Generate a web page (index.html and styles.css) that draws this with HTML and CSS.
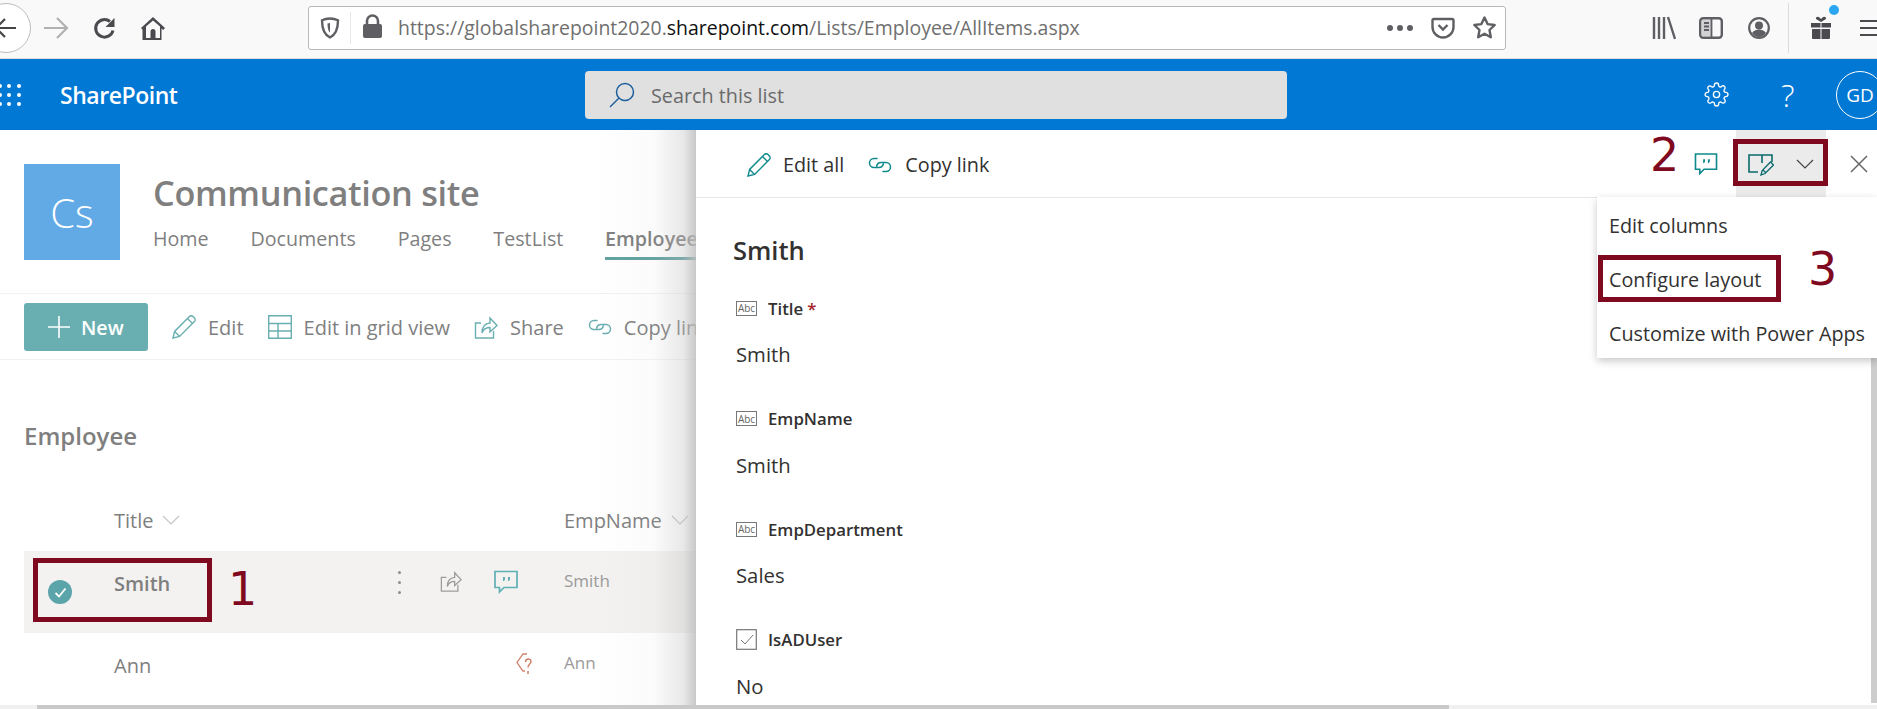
FILE: index.html
```html
<!DOCTYPE html>
<html lang="en">
<head>
<meta charset="utf-8">
<title>Employee - All Items</title>
<link rel="stylesheet" href="styles.css">
</head>
<body>
<svg class="defs" width="0" height="0" aria-hidden="true">
  <symbol id="i-pencil" viewBox="0 0 24 24"><path d="M1 23l1.600-6.600L17.400 1.600c1-1 2.600-1 3.600 0l1.400 1.400c1 1 1 2.600 0 3.600L7.600 21.400zM2.600 16.400l5 5M15.500 3.500l5 5" fill="none" stroke="currentColor" stroke-width="1.400"/></symbol>
  <symbol id="i-link" viewBox="0 0 24 20"><path d="M9 3.500H6a4.500 4.500 0 0 0 0 9h5a4.500 4.500 0 0 0 4.300-3.500M15 16.500h3a4.500 4.500 0 0 0 0-9h-5A4.500 4.500 0 0 0 8.700 11" fill="none" stroke="currentColor" stroke-width="1.500" stroke-linecap="round"/></symbol>
  <symbol id="i-share" viewBox="0 0 24 24"><path d="M7 8H1.500v15h18v-7M8 18c0-6 3-9.500 8-10V3l7 7.500L16 17v-4.500c-4 0-6.500 1.500-8 5.500z" fill="none" stroke="currentColor" stroke-width="1.400"/></symbol>
  <symbol id="i-comment" viewBox="0 0 24 23"><path d="M1 1h22v16H10l-4.500 4.500V17H1z" fill="none" stroke="currentColor" stroke-width="1.700"/><path d="M9 6.500h2v2.500l-1 1.500H9zM14 6.500h2v2.500l-1 1.500h-1z" fill="currentColor"/></symbol>
  <symbol id="i-chev" viewBox="0 0 18 10"><path d="M1 1l8 8 8-8" fill="none" stroke="currentColor" stroke-width="1.200"/></symbol>
</svg>

<div class="page">
  <header class="browser">
    <div class="back">
      <svg width="22" height="20" viewBox="0 0 22 20"><path d="M21 10H1M10 1l-9 9 9 9" fill="none" stroke="#444" stroke-width="2.200"/></svg>
    </div>
    <svg class="fwd" width="26" height="22" viewBox="0 0 26 22"><path d="M1 11h23M14 1l10 10-10 10" fill="none" stroke="#b1b1b1" stroke-width="2.200"/></svg>
    <svg class="reload" width="24" height="24" viewBox="0 0 24 24"><path d="M20 14.500A8.800 8.800 0 1 1 17 5.500" fill="none" stroke="#4a4a4f" stroke-width="3"/><path d="M21.500 2v9h-9z" fill="#4a4a4f"/></svg>
    <svg class="home" width="26" height="26" viewBox="0 0 26 26"><path d="M1 13L13 2l12 11-1.800 2-1.700-1.500V25h-19V13.500L2.800 15z" fill="#4a4a4f"/><path d="M6 11.500L13 5.500l7 6V23h-4.500v-6.500a2.500 2.500 0 0 0-5 0V23H6z" fill="#f9f9fa"/><rect x="11.500" y="17" width="3" height="5" fill="#4a4a4f"/></svg>
    <div class="urlbar">
      <svg class="shield" width="20" height="22" viewBox="0 0 20 22"><path d="M10 1.500c3 0 6 .8 8 1.800 0 9-2.500 14.500-8 17.200C4.500 17.800 2 12.300 2 3.300c2-1 5-1.800 8-1.800z" fill="none" stroke="#5f5f63" stroke-width="2.400"/><path d="M10 6v9.500c-1.500-1-2.500-4-2.500-9z" fill="#5f5f63"/></svg>
      <span class="url-div"></span>
      <svg class="lock" width="19" height="24" viewBox="0 0 19 24"><path d="M4 11V7a5.500 5.500 0 0 1 11 0v4" fill="none" stroke="#5f5f63" stroke-width="2.600"/><rect y="10" width="19" height="14" rx="2" fill="#5f5f63"/></svg>
      <span class="url">https://globalsharepoint2020.<b>sharepoint.com</b>/Lists/Employee/AllItems.aspx</span>
      <span class="url-dots"><i></i><i></i><i></i></span>
      <svg class="pocket" width="24" height="22" viewBox="0 0 24 22"><path d="M3 2h18a1.500 1.500 0 0 1 1.500 1.500V10a10.500 10.500 0 0 1-21 0V3.500A1.500 1.500 0 0 1 3 2z" fill="none" stroke="#5f5f63" stroke-width="2.400"/><path d="M7.500 8l4.500 4.500L16.500 8" fill="none" stroke="#5f5f63" stroke-width="2.400"/></svg>
      <svg class="star" width="25" height="25" viewBox="0 0 25 25"><path d="M12.500 2.500l3.100 6.600 7.100.9-5.200 5 1.300 7.200-6.300-3.500-6.300 3.500 1.300-7.200-5.200-5 7.100-.9z" fill="none" stroke="#5f5f63" stroke-width="2.400" stroke-linejoin="round"/></svg>
    </div>
    <svg class="library" width="24" height="24" viewBox="0 0 24 24"><path d="M2 1v22M7 1v22M12 1v22M16 1l7 22" fill="none" stroke="#5f5f63" stroke-width="2.400"/></svg>
    <svg class="sidebar" width="24" height="22" viewBox="0 0 24 22"><rect x="1.200" y="1.200" width="21.600" height="19.600" rx="3" fill="none" stroke="#5f5f63" stroke-width="2.400"/><path d="M3 3h9.500v16H3z" fill="#5f5f63" opacity=".25"/><path d="M12.500 2v18M5 6h5M5 9.500h5M5 13h5" fill="none" stroke="#5f5f63" stroke-width="1.800"/></svg>
    <svg class="profile" width="22" height="22" viewBox="0 0 22 22"><circle cx="11" cy="11" r="9.800" fill="none" stroke="#5f5f63" stroke-width="2.200"/><circle cx="11" cy="8.500" r="4" fill="#5f5f63"/><path d="M4 16c2-3 4.500-3.500 7-3.500s5 .5 7 3.500c-2 2.500-4.500 4-7 4s-5-1.500-7-4z" fill="#5f5f63"/></svg>
    <span class="bar-div"></span>
    <div class="gift">
      <svg width="22" height="24" viewBox="0 0 22 24"><path d="M1 7h9.500v4.500H1zM11.500 7H21v4.500h-9.500zM2 13h8.500v10H3a1 1 0 0 1-1-1zM11.500 13H20v9a1 1 0 0 1-1 1h-7.500z" fill="#4a4a4f"/><path d="M11 6L6 3c-.5-2 2-3 3.500-1.500L11 3l1.500-1.500C14 0 16.500 1 16 3z" fill="#4a4a4f"/></svg>
      <span class="gift-dot"></span>
    </div>
    <span class="burger"><i></i><i></i><i></i></span>
  </header>

  <nav class="suite">
    <svg class="waffle" width="22" height="24" viewBox="0 0 22 24" fill="#fff"><circle cx="1" cy="3" r="2"/><circle cx="10" cy="3" r="2"/><circle cx="20" cy="3" r="2"/><circle cx="1" cy="12" r="2"/><circle cx="10" cy="12" r="2"/><circle cx="20" cy="12" r="2"/><circle cx="1" cy="21" r="2"/><circle cx="10" cy="21" r="2"/><circle cx="20" cy="21" r="2"/></svg>
    <span class="brand">SharePoint</span>
    <div class="search">
      <svg width="26" height="26" viewBox="0 0 26 26"><circle cx="16" cy="10" r="8.500" fill="none" stroke="#1f5f9e" stroke-width="1.500"/><path d="M10 16L1 25" fill="none" stroke="#1f5f9e" stroke-width="1.500"/></svg>
      <span class="search-text">Search this list</span>
    </div>
    <svg class="gear" width="25" height="25" viewBox="0 0 24 24"><circle cx="12" cy="12" r="3" fill="none" stroke="#fff" stroke-width="1.300"/><path d="M19.400 15a1.650 1.650 0 0 0 .33 1.820l.06.06a2 2 0 0 1 0 2.830 2 2 0 0 1-2.830 0l-.06-.06a1.650 1.650 0 0 0-1.820-.33 1.650 1.650 0 0 0-1 1.510V21a2 2 0 0 1-2 2 2 2 0 0 1-2-2v-.09A1.650 1.650 0 0 0 9 19.400a1.650 1.650 0 0 0-1.820.33l-.06.06a2 2 0 0 1-2.830 0 2 2 0 0 1 0-2.830l.06-.06a1.650 1.650 0 0 0 .33-1.820 1.650 1.650 0 0 0-1.510-1H3a2 2 0 0 1-2-2 2 2 0 0 1 2-2h.09A1.650 1.650 0 0 0 4.600 9a1.650 1.650 0 0 0-.33-1.820l-.06-.06a2 2 0 0 1 0-2.830 2 2 0 0 1 2.830 0l.06.06a1.650 1.650 0 0 0 1.820.33H9a1.650 1.650 0 0 0 1-1.510V3a2 2 0 0 1 2-2 2 2 0 0 1 2 2v.09a1.650 1.650 0 0 0 1 1.510 1.650 1.650 0 0 0 1.820-.33l.06-.06a2 2 0 0 1 2.830 0 2 2 0 0 1 0 2.830l-.06.06a1.650 1.650 0 0 0-.33 1.820V9a1.650 1.650 0 0 0 1.510 1H21a2 2 0 0 1 2 2 2 2 0 0 1-2 2h-.09a1.650 1.650 0 0 0-1.510 1z" fill="none" stroke="#fff" stroke-width="1.300"/></svg>
    <span class="help">?</span>
    <span class="avatar">GD</span>
  </nav>

  <main class="site">
    <section class="site-head">
      <div class="logo">Cs</div>
      <div class="site-text">
        <h1>Communication site</h1>
        <ul class="site-nav">
          <li>Home</li><li>Documents</li><li>Pages</li><li>TestList</li><li class="current">Employee</li>
        </ul>
      </div>
    </section>

    <section class="commands">
      <button class="new"><svg width="22" height="22" viewBox="0 0 22 22"><path d="M11 0v22M0 11h22" stroke="#fff" stroke-width="1.600"/></svg><span class="new-label">New</span></button>
      <span class="cmd cmd-edit"><svg class="ic" width="24" height="24"><use href="#i-pencil"/></svg>Edit</span>
      <span class="cmd"><svg class="ic" width="24" height="24" viewBox="0 0 24 24"><path d="M.7.7h22.600v22.600H.7zM.7 8.500h22.600M.7 16h22.600M10 8.500v14.800" fill="none" stroke="currentColor" stroke-width="1.400"/></svg>Edit in grid view</span>
      <span class="cmd"><svg class="ic" width="24" height="24"><use href="#i-share"/></svg>Share</span>
      <span class="cmd"><svg class="ic" width="24" height="20"><use href="#i-link"/></svg>Copy link</span>
    </section>

    <h2 class="list-name">Employee</h2>

    <div class="list">
      <div class="row row-head">
        <span class="col-title">Title<svg class="chev" width="18" height="10"><use href="#i-chev"/></svg></span>
        <span class="col-name">EmpName<svg class="chev" width="18" height="10"><use href="#i-chev"/></svg></span>
      </div>
      <div class="row row-selected">
        <span class="tick"><svg width="13" height="11" viewBox="0 0 13 11"><path d="M1.500 6l3.500 3.500 6.500-8" fill="none" stroke="#fff" stroke-width="1.800"/></svg></span>
        <span class="col-title strong">Smith</span>
        <span class="kebab"><i></i><i></i><i></i></span>
        <svg class="act-share" width="22" height="24"><use href="#i-share"/></svg>
        <svg class="act-comment" width="24" height="24"><use href="#i-comment"/></svg>
        <span class="col-name cell">Smith</span>
      </div>
      <div class="row row-plain">
        <span class="col-title">Ann</span>
        <svg class="tag" width="17" height="24" viewBox="0 0 17 24"><path d="M11 1H7L1 9.500 7 18h2" fill="none" stroke="#d0806a" stroke-width="1.300"/><path d="M9.500 9c0-4 5.500-4 5.500-.5 0 2.500-3 2.500-3 6M12 18v3" fill="none" stroke="#d0806a" stroke-width="1.500"/></svg>
        <span class="col-name cell">Ann</span>
      </div>
    </div>
  </main>

  <div class="shade"></div>

  <aside class="panel">
    <div class="panel-bar">
      <span class="pcmd"><svg class="pic" width="24" height="24"><use href="#i-pencil"/></svg>Edit all</span>
      <span class="pcmd pcmd-link"><svg class="pic" width="24" height="20"><use href="#i-link"/></svg>Copy link</span>
      <svg class="pic p-comment" width="24" height="22"><use href="#i-comment"/></svg>
      <div class="p-layout">
        <svg class="pic" width="26" height="24" viewBox="0 0 26 24"><path d="M10 20H1V3h23v7M14 3v8" fill="none" stroke="currentColor" stroke-width="1.600"/><path d="M13 23l1.200-4.500L22.500 10l3 3-8.500 8.500zM15 18l3 3" fill="none" stroke="currentColor" stroke-width="1.300"/></svg>
        <svg class="p-chev" width="18" height="10"><use href="#i-chev"/></svg>
      </div>
      <svg class="p-close" width="18" height="18" viewBox="0 0 18 18"><path d="M1 1l16 16M17 1L1 17" stroke="#666" stroke-width="1.500"/></svg>
    </div>
    <h2 class="item-title">Smith</h2>
    <dl class="fields">
      <div class="field">
        <dt><span class="abc">Abc</span>Title <em>*</em></dt>
        <dd>Smith</dd>
      </div>
      <div class="field">
        <dt><span class="abc">Abc</span>EmpName</dt>
        <dd>Smith</dd>
      </div>
      <div class="field">
        <dt><span class="abc">Abc</span>EmpDepartment</dt>
        <dd>Sales</dd>
      </div>
      <div class="field">
        <dt><svg class="checkbox" width="21" height="21" viewBox="0 0 21 21"><rect x=".7" y=".7" width="19.600" height="19.600" fill="none" stroke="#777" stroke-width="1.200"/><path d="M5 11l4 4 8-9" fill="none" stroke="#777" stroke-width="1"/></svg>IsADUser</dt>
        <dd>No</dd>
      </div>
    </dl>
  </aside>

  <span class="v-thumb"></span>

  <ul class="menu">
    <li>Edit columns</li>
    <li>Configure layout</li>
    <li>Customize with Power Apps</li>
  </ul>

  <div class="h-scroll"><span></span></div>

  <span class="mark box-1"></span>
  <span class="mark box-2"></span>
  <span class="mark box-3"></span>
  <span class="num num-1">1</span>
  <span class="num num-2">2</span>
  <span class="num num-3">3</span>
</div>
</body>
</html>
```

FILE: styles.css
```css
* { box-sizing: border-box; }
html, body { margin: 0; padding: 0; background: #fff; }
body { font-family: "Open Sans", "Noto Sans", sans-serif; overflow: hidden; }
.defs { position: absolute; }
ul, dl, dd, h1, h2 { margin: 0; padding: 0; list-style: none; }
.page { position: relative; width: 1877px; height: 709px; overflow: hidden; }

/* browser chrome */
.browser { display: flex; align-items: center; height: 59px; background: #f9f9fa; border-bottom: 1px solid #dcdcde; padding-bottom: 3px; }
.browser svg { flex: none; }
.back { flex: none; width: 50px; height: 50px; margin-left: -19px; border: 1px solid #bdbdbd; border-radius: 50%; background: #fff; display: flex; align-items: center; justify-content: center; }
.fwd { margin-left: 12px; }
.reload { margin-left: 24px; }
.home { margin-left: 23px; }
.urlbar { flex: none; display: flex; align-items: center; width: 1198px; height: 44px; margin-left: 142px; background: #fff; border: 1px solid #b8b8b8; border-radius: 3px; }
.shield { margin-left: 11px; }
.url-div { width: 1px; height: 32px; margin-left: 10px; background: #e6e6e6; }
.lock { margin-left: 12px; margin-bottom: 3px; }
.url { margin-left: 16px; font-size: 19.450px; color: #6f6f6f; white-space: nowrap; width: 989px; }
.url b { font-weight: 400; color: #111; }
.url-dots { display: flex; gap: 4px; }
.url-dots i { width: 6px; height: 6px; border-radius: 50%; background: #5f5f63; }
.pocket { margin-left: 18px; }
.star { margin-left: 17px; }
.library { margin-left: 146px; }
.sidebar { margin-left: 23px; }
.profile { margin-left: 25px; }
.bar-div { width: 1px; height: 50px; margin-left: 18px; background: #dcdcde; }
.gift { position: relative; width: 22px; height: 24px; margin-left: 21px; }
.gift-dot { position: absolute; top: -11px; right: -7px; width: 10px; height: 10px; border-radius: 50%; background: #2aa7f0; }
.burger { display: flex; flex-direction: column; gap: 5px; width: 18px; margin-left: 28px; }
.burger i { display: block; height: 2px; background: #4a4a4f; }

/* suite bar */
.suite { display: flex; align-items: center; height: 71px; background: #0078d4; color: #fff; }
.suite svg { flex: none; }
.waffle { margin-left: -1px; }
.brand { flex: none; margin-left: 39px; width: 125px; font-size: 23px; font-weight: 600; letter-spacing: -.02em; padding-top: 1px; white-space: nowrap; }
.search { flex: none; display: flex; align-items: center; gap: 16px; width: 702px; height: 48px; margin-left: 400px; padding-left: 24px; background: #e0e0e0; border-radius: 4px; color: #6a6a6a; font-size: 19.800px; }
.search-text { padding-top: 1px; }
.gear { margin-left: 417px; }
.help { flex: none; margin-left: 52px; width: 19px; font-size: 32px; font-weight: 300; line-height: 1; }
.avatar { flex: none; display: flex; align-items: center; justify-content: center; width: 48px; height: 48px; margin-left: 36px; border: 1px solid #fff; border-radius: 50%; font-size: 19px; }

/* site content */
.site { color: #7f7f7f; }
.site-head { display: flex; gap: 33px; padding: 34px 0 0 24px; height: 163px; }
.logo { flex: none; width: 96px; height: 96px; display: flex; align-items: center; justify-content: center; background: #62aae6; color: #fff; font-size: 40px; font-weight: 300; }
.site-text h1 { font-size: 34.300px; font-weight: 600; line-height: 40px; letter-spacing: -.01em; margin-top: 9px; white-space: nowrap; }
.site-nav { display: flex; gap: 41.800px; margin-top: 13px; font-size: 19.700px; white-space: nowrap; }
.site-nav li { line-height: 26px; height: 34px; }
.current { font-weight: 600; border-bottom: 3px solid #5fa1a0; }

.commands { display: flex; align-items: center; gap: 24px; height: 67px; padding-left: 24px; border-top: 1px solid #f2f2f2; border-bottom: 1px solid #f2f2f2; white-space: nowrap; }
.new { display: flex; align-items: center; gap: 11px; flex: none; width: 124px; height: 48px; padding: 0 0 0 24px; border: 0; border-radius: 3px; background: #69aeb0; color: #fff; font: 600 19.600px "Open Sans", sans-serif; }
.new-label { padding-top: 2px; }
.cmd { display: flex; align-items: center; gap: 12px; padding-top: 2px; font-size: 20px; color: #808080; }
.cmd .ic { color: #69aeb0; flex: none; margin-top: -2px; }

.list-name { margin: 58px 0 0 24px; font-size: 24px; font-weight: 600; line-height: 36px; }

.list { margin: 50px 0 0 24px; width: 672px; }
.row { display: grid; grid-template-columns: 25px 24px 41px 287px 61px 56px 46px auto; grid-template-rows: 1fr; align-items: center; }
.row > * { grid-row: 1; }
.row-head { height: 62px; margin-top: -15px; }
.col-title { grid-column: 4; white-space: nowrap; font-size: 20px; display: flex; align-items: center; gap: 9px; }
.col-name { grid-column: 8; white-space: nowrap; font-size: 20px; display: flex; align-items: center; gap: 9px; }
.chev { color: #c4c4c4; }
.row-selected { height: 82px; background: #f3f2f1; }
.row-selected .col-title { margin-top: -18px; }
.strong { font-weight: 600; }
.cell { font-size: 17px; color: #9a9a9a; }
.row-selected .cell { margin-top: -24px; }
.tick { grid-column: 2; margin-left: -1px; display: flex; align-items: center; justify-content: center; width: 24px; height: 24px; border-radius: 50%; background: #5ba5aa; }
.kebab { grid-column: 4; justify-self: end; margin-top: -20px; display: flex; flex-direction: column; gap: 7px; }
.kebab i { width: 3px; height: 3px; border-radius: 50%; background: #8c8c8c; }
.act-share { grid-column: 5; color: #9d9d9d; justify-self: end; margin-top: -22px; }
.act-comment { grid-column: 6; color: #5fb0b5; justify-self: end; margin-top: -20px; }
.row-plain { height: 66px; }
.row-plain .col-title { margin-top: -2px; }
.tag { grid-column: 7; justify-self: start; margin-left: -2px; margin-top: -2px; }
.row-plain .cell { margin-top: -8px; }

.shade { position: absolute; left: 590px; top: 130px; width: 106px; height: 575px; background: linear-gradient(to right, rgba(190,190,190,0) 0%, rgba(190,190,190,.06) 60%, rgba(190,190,190,.35) 88%, rgba(190,190,190,.85) 100%); }

/* item panel */
.panel { position: absolute; left: 696px; top: 130px; right: 0; bottom: 4px; background: #fff; color: #323130; }
.panel-bar { display: flex; align-items: center; height: 68px; padding-left: 51px; border-bottom: 1px solid #e6e6e6; }
.pcmd { display: flex; align-items: center; gap: 12px; font-size: 19.800px; white-space: nowrap; padding-top: 2px; }
.pcmd-link { margin-left: 24px; gap: 13px; }
.pic { color: #0f8a8c; flex: none; }
.p-comment { margin-left: 705px; }
.p-layout { display: flex; align-items: center; flex: none; width: 90px; height: 67px; margin-left: 18px; padding-left: 12px; background: #ebebeb; }
.p-layout .pic { color: #0b6a6c; }
.p-chev { margin-left: 22px; color: #444; flex: none; }
.p-close { margin-left: 24px; flex: none; }
.item-title { margin: 36px 0 0 37px; font-size: 25.500px; font-weight: 600; line-height: 32px; }
.fields { margin: 30px 0 0 40px; }
.field { height: 110.500px; }
dt { display: flex; align-items: center; gap: 11px; height: 24px; font-size: 16.800px; font-weight: 600; }
dt em { color: #a4262c; font-style: normal; margin-left: -7px; }
dd { margin-top: 21px; font-size: 20.300px; line-height: 26px; }
.abc { flex: none; display: flex; align-items: center; justify-content: center; width: 21px; height: 15px; border: 1px solid #777; font-size: 10px; font-weight: 400; color: #666; }
.checkbox { flex: none; }

.v-thumb { position: absolute; right: 0; top: 300px; bottom: 6px; width: 6px; background: #cdcdcd; }

.menu { position: absolute; left: 1597px; top: 197px; right: 0; height: 161px; padding-top: 1px; background: #fff; box-shadow: 0 3px 8px rgba(0,0,0,.22); color: #323130; font-size: 19.800px; white-space: nowrap; }
.menu li { display: flex; align-items: center; height: 54px; padding-left: 12px; }

.h-scroll { position: absolute; left: 0; right: 0; bottom: 0; height: 4px; background: #f0f0f0; }
.h-scroll span { display: block; width: 1412px; height: 4px; margin-left: 37px; background: #c9c9c9; }

/* annotations drawn on the screenshot */
.mark { position: absolute; border: 5px solid #7f0a1f; }
.box-1 { left: 33px; top: 558px; width: 179px; height: 64px; }
.box-2 { left: 1733px; top: 139px; width: 95px; height: 47px; }
.box-3 { left: 1598px; top: 255px; width: 183px; height: 47px; }
.num { position: absolute; font-family: "DejaVu Sans", sans-serif; font-size: 46px; line-height: 46px; color: #7f0a1f; }
.num-1 { left: 228px; top: 566px; }
.num-2 { left: 1650px; top: 132px; }
.num-3 { left: 1808px; top: 246px; }
```
